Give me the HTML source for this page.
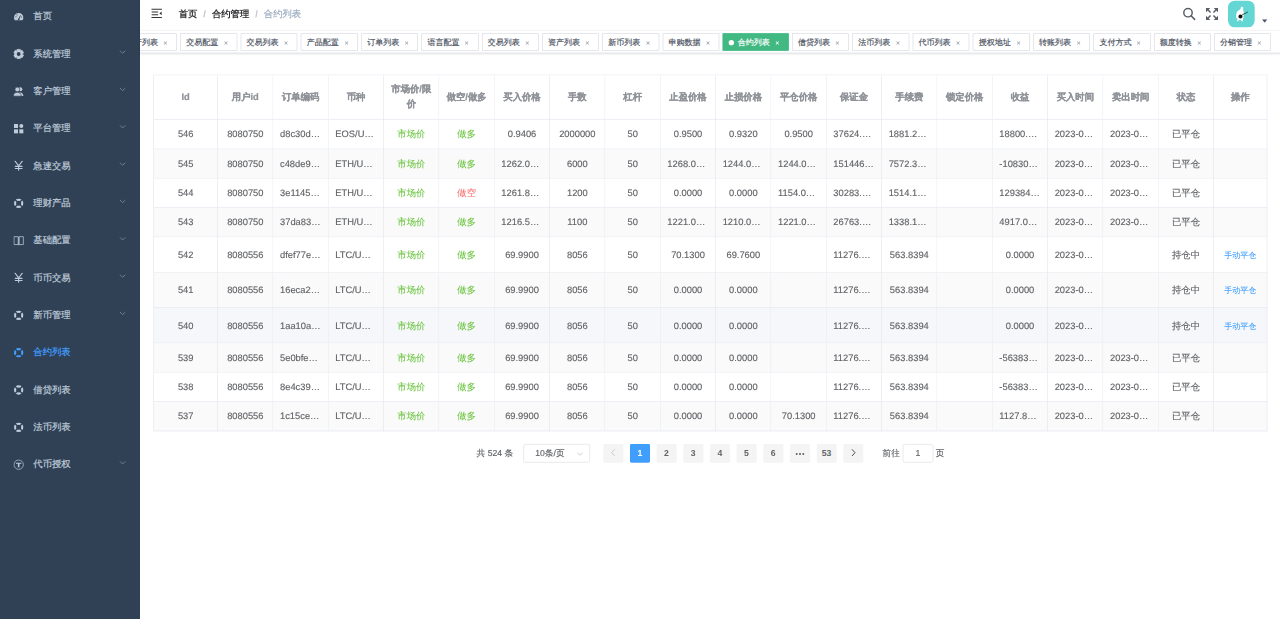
<!DOCTYPE html><html><head><meta charset="utf-8"><style>
*{box-sizing:border-box}
html,body{margin:0;padding:0;background:#fff;overflow:hidden}
body{width:1280px;height:619px;font-family:"Liberation Sans",sans-serif;text-rendering:geometricPrecision}
#z{transform:scale(0.6666667);transform-origin:0 0;width:1920px;height:929px;position:relative;overflow:hidden}
#app{position:absolute;left:0;top:-4px;width:1920px;height:940px}
.sb{position:absolute;left:0;top:0;width:210px;height:940px;background:#304156}
.mi{position:relative;height:56px;line-height:56px;padding-left:20px;font-size:14px;color:#bfcbd9;white-space:nowrap}
.mi svg{position:absolute;left:20px;top:21px}
.mi .t{position:absolute;left:50px;top:0;-webkit-text-stroke:0.3px #bfcbd9}
.mi.act .t{-webkit-text-stroke:0.3px #409eff}
.mi.act .t{color:#409eff}
.mi .ar{position:absolute;left:auto;right:20px;top:22px;width:12px;height:8px}
.main{position:absolute;left:210px;top:0;width:1710px;height:940px}
.nav{position:absolute;left:0;top:0;width:1710px;height:50px;box-shadow:0 1px 4px rgba(0,21,41,.08);background:#fff}
.ham{position:absolute;left:15px;top:14px}
.bc{position:absolute;left:58px;top:0;line-height:50px;font-size:14px;color:#303133;white-space:nowrap}
.bc .sep{margin:0 9px;color:#c0c4cc;font-weight:700}
.bc .last{color:#97a8be;font-weight:400}
.bc .lk{font-weight:700}
.tv{position:absolute;left:0;top:50px;width:1710px;height:34px;background:#fff;border-bottom:1px solid #d8dce5;box-shadow:0 1px 3px 0 rgba(0,0,0,.12),0 0 3px 0 rgba(0,0,0,.04);overflow:hidden}
.tw{position:absolute;left:-35px;top:4px;white-space:nowrap}
.tg{display:inline-block;position:relative;height:26px;line-height:27px;border:1px solid #d8dce5;color:#495060;background:#fff;padding:0 8px;font-size:12px;margin-left:5px;vertical-align:top;-webkit-text-stroke:0.25px #495060}
.tg.on{-webkit-text-stroke:0.25px #fff}
.tg .x{display:inline-block;width:16.08px;height:0;vertical-align:0;text-align:center;position:relative}
.tg .x:before{content:"";position:absolute;left:5px;top:-4px;width:6px;height:1px;background:#9da3ad;transform:rotate(45deg)}
.tg .x:after{content:"";position:absolute;left:5px;top:-4px;width:6px;height:1px;background:#9da3ad;transform:rotate(-45deg)}
.tg.on{background:#42b983;color:#fff;border-color:#42b983}
.tg.on:before{content:"";background:#fff;display:inline-block;width:8px;height:8px;border-radius:50%;position:relative;margin-right:2px}
.tg.on .x:before,.tg.on .x:after{background:#fff}
table.tb{position:absolute;left:20px;top:116px;width:1670px;table-layout:fixed;border-collapse:separate;border-spacing:0;border-top:1px solid #e3e7ef;border-left:1px solid #e3e7ef;font-size:14px;color:#606266}
.tb td,.tb th{border-right:1px solid #e3e7ef;border-bottom:1px solid #e3e7ef;padding:0;text-align:center;vertical-align:middle}
.tb th{color:#909399;font-weight:700;height:67px;background:#fff;-webkit-text-stroke:0.35px #909399}
.tb th .c{position:relative;top:-1px}
.tb td .c{-webkit-text-stroke-width:0.2px}
.tb .c{padding:0 10px;line-height:23px;overflow:hidden;text-overflow:ellipsis;white-space:nowrap;text-align:center}
.tb th .c{white-space:normal;word-break:break-all;text-overflow:clip}
.g{color:#67c23a}.r{color:#f56c6c}.bl{color:#409eff}
.tb td .c.g,.tb td .c.r,.tb td .c.bl{-webkit-text-stroke-width:0.1px}
.tot,.jmp,.sel{-webkit-text-stroke:0.2px #606266}
.bc .last{-webkit-text-stroke:0.2px #97a8be}
.pg{position:absolute;left:0.8px;top:668px;width:1710px;text-align:center;white-space:nowrap;font-size:13px}
.pgi{display:inline-block;padding:2px 5px;color:#303133;font-weight:700}
.pgi>*{display:inline-block;vertical-align:top;height:28px;line-height:28px}
.tot{margin-right:10px;font-weight:400;color:#606266}
.sel{width:100px;margin:0 15px 0 5px;border:1px solid #dcdfe6;border-radius:3px;position:relative;font-weight:400;color:#606266;text-align:left;padding-left:17px;line-height:26px}
.btn{min-width:30px;margin:0 5px;background:#f4f4f5;color:#606266;border-radius:2px;text-align:center}
.btn.on{background:#409eff;color:#fff}
.jmp{margin-left:24px;font-weight:400;color:#606266}
.ed{display:inline-block;width:46px;height:28px;margin:0 4px;border:1px solid #dcdfe6;border-radius:3px;text-align:center;vertical-align:top;line-height:26px;color:#606266}
</style></head><body><div id="z"><div id="app"><div class="sb"><div class="mi"><svg width="16" height="16" viewBox="0 0 16 16"><path d="M8 2.5A7 7 0 0 0 1 9.5c0 1.6.5 3 1.4 4h11.2c.9-1 1.4-2.4 1.4-4a7 7 0 0 0-7-7z" fill="#bfcbd9"/><path d="M8 12.2 10.8 6.2" stroke="#304156" stroke-width="1.3"/><circle cx="8" cy="12" r="1.3" fill="#304156"/><circle cx="4" cy="8" r=".8" fill="#304156"/><circle cx="5.5" cy="5.3" r=".8" fill="#304156"/><circle cx="12.2" cy="8.6" r=".8" fill="#304156"/></svg><span class="t">首页</span></div><div class="mi"><svg width="16" height="16" viewBox="0 0 16 16"><path d="M5.22 3.14 L5.75 0.74 L10.25 0.74 L10.78 3.14 L10.82 3.16 L13.16 2.42 L15.41 6.31 L13.60 7.98 L13.60 8.02 L15.41 9.69 L13.16 13.58 L10.82 12.84 L10.78 12.86 L10.25 15.26 L5.75 15.26 L5.22 12.86 L5.18 12.84 L2.84 13.58 L0.59 9.69 L2.40 8.02 L2.40 7.98 L0.59 6.31 L2.84 2.42 L5.18 3.16Z" fill="#bfcbd9" stroke="#bfcbd9" stroke-width="1" stroke-linejoin="round"/><circle cx="8" cy="8" r="2.9" fill="#304156"/></svg><span class="t">系统管理</span><svg class="ar" viewBox="0 0 12 8"><path d="M2 2 6 6 10 2" stroke="#909399" stroke-width="1.1" fill="none"/></svg></div><div class="mi"><svg width="16" height="16" viewBox="0 0 16 16"><circle cx="10.5" cy="5" r="3" fill="#bfcbd9"/><path d="M6 15c0-3.5 2-5.4 4.5-5.4S15 11.5 15 15z" fill="#bfcbd9"/><circle cx="6" cy="5.2" r="3.6" fill="#bfcbd9" stroke="#304156" stroke-width="1"/><path d="M0 15.3c0-4 2.5-5.8 6-5.8s6 1.8 6 5.8z" fill="#bfcbd9" stroke="#304156" stroke-width="1"/></svg><span class="t">客户管理</span><svg class="ar" viewBox="0 0 12 8"><path d="M2 2 6 6 10 2" stroke="#909399" stroke-width="1.1" fill="none"/></svg></div><div class="mi"><svg width="16" height="16" viewBox="0 0 16 16"><rect x="1" y="1" width="6" height="6" fill="#bfcbd9"/><circle cx="12" cy="4" r="3" fill="#bfcbd9"/><rect x="1" y="9" width="6" height="6" fill="#bfcbd9"/><rect x="9" y="9" width="6" height="6" fill="#bfcbd9"/></svg><span class="t">平台管理</span><svg class="ar" viewBox="0 0 12 8"><path d="M2 2 6 6 10 2" stroke="#909399" stroke-width="1.1" fill="none"/></svg></div><div class="mi"><svg width="16" height="16" viewBox="0 0 16 16"><path d="M2 0 8 7.8 14 0M8 7.8V15M2.3 8.6h11.4M2.3 11.8h11.4" stroke="#bfcbd9" stroke-width="1.6" fill="none"/></svg><span class="t">急速交易</span><svg class="ar" viewBox="0 0 12 8"><path d="M2 2 6 6 10 2" stroke="#909399" stroke-width="1.1" fill="none"/></svg></div><div class="mi"><svg width="16" height="16" viewBox="0 0 16 16"><circle cx="8" cy="8" r="5.4" stroke="#bfcbd9" stroke-width="3.2" fill="none"/><path d="M8 8 1.5 1.5M8 8l6.5-6.5M8 8l6.5 6.5M8 8l-6.5 6.5" stroke="#304156" stroke-width="2"/></svg><span class="t">理财产品</span><svg class="ar" viewBox="0 0 12 8"><path d="M2 2 6 6 10 2" stroke="#909399" stroke-width="1.1" fill="none"/></svg></div><div class="mi"><svg width="16" height="16" viewBox="0 0 16 16"><path d="M1 2h6.3v11.8H1zM8.7 2H15v11.8H8.7z" stroke="#bfcbd9" stroke-width="1.1" fill="none"/><path d="M8 2.5v12.5" stroke="#bfcbd9" stroke-width="1"/></svg><span class="t">基础配置</span><svg class="ar" viewBox="0 0 12 8"><path d="M2 2 6 6 10 2" stroke="#909399" stroke-width="1.1" fill="none"/></svg></div><div class="mi"><svg width="16" height="16" viewBox="0 0 16 16"><path d="M2 0 8 7.8 14 0M8 7.8V15M2.3 8.6h11.4M2.3 11.8h11.4" stroke="#bfcbd9" stroke-width="1.6" fill="none"/></svg><span class="t">币币交易</span><svg class="ar" viewBox="0 0 12 8"><path d="M2 2 6 6 10 2" stroke="#909399" stroke-width="1.1" fill="none"/></svg></div><div class="mi"><svg width="16" height="16" viewBox="0 0 16 16"><circle cx="8" cy="8" r="5.4" stroke="#bfcbd9" stroke-width="3.2" fill="none"/><path d="M8 8 1.5 1.5M8 8l6.5-6.5M8 8l6.5 6.5M8 8l-6.5 6.5" stroke="#304156" stroke-width="2"/></svg><span class="t">新币管理</span><svg class="ar" viewBox="0 0 12 8"><path d="M2 2 6 6 10 2" stroke="#909399" stroke-width="1.1" fill="none"/></svg></div><div class="mi act"><svg width="16" height="16" viewBox="0 0 16 16"><circle cx="8" cy="8" r="5.4" stroke="#409eff" stroke-width="3.2" fill="none"/><path d="M8 8 1.5 1.5M8 8l6.5-6.5M8 8l6.5 6.5M8 8l-6.5 6.5" stroke="#304156" stroke-width="2"/></svg><span class="t">合约列表</span></div><div class="mi"><svg width="16" height="16" viewBox="0 0 16 16"><circle cx="8" cy="8" r="5.4" stroke="#bfcbd9" stroke-width="3.2" fill="none"/><path d="M8 8 1.5 1.5M8 8l6.5-6.5M8 8l6.5 6.5M8 8l-6.5 6.5" stroke="#304156" stroke-width="2"/></svg><span class="t">借贷列表</span></div><div class="mi"><svg width="16" height="16" viewBox="0 0 16 16"><circle cx="8" cy="8" r="5.4" stroke="#bfcbd9" stroke-width="3.2" fill="none"/><path d="M8 8 1.5 1.5M8 8l6.5-6.5M8 8l6.5 6.5M8 8l-6.5 6.5" stroke="#304156" stroke-width="2"/></svg><span class="t">法币列表</span></div><div class="mi"><svg width="16" height="16" viewBox="0 0 16 16"><circle cx="8" cy="8" r="7" stroke="#bfcbd9" stroke-width="1.1" fill="none"/><path d="M4 5h8v1.6H9.2V12H6.8V6.6H4z" fill="#bfcbd9"/></svg><span class="t">代币授权</span><svg class="ar" viewBox="0 0 12 8"><path d="M2 2 6 6 10 2" stroke="#909399" stroke-width="1.1" fill="none"/></svg></div></div><div class="main"><div class="nav"><svg class="ham" width="20" height="20" viewBox="0 0 1024 1024"><path transform="rotate(180 512 512)" fill="#333" d="M408 442h480c4.4 0 8-3.6 8-8v-56c0-4.4-3.6-8-8-8H408c-4.4 0-8 3.6-8 8v56c0 4.4 3.6 8 8 8zm-8 204c0 4.4 3.6 8 8 8h480c4.4 0 8-3.6 8-8v-56c0-4.4-3.6-8-8-8H408c-4.4 0-8 3.6-8 8v56zm504-486H120c-4.4 0-8 3.6-8 8v56c0 4.4 3.6 8 8 8h784c4.4 0 8-3.6 8-8v-56c0-4.4-3.6-8-8-8zm0 632H120c-4.4 0-8 3.6-8 8v56c0 4.4 3.6 8 8 8h784c4.4 0 8-3.6 8-8v-56c0-4.4-3.6-8-8-8zM142.4 642.1L298.7 519a8.84 8.84 0 0 0 0-13.9L142.4 381.9c-5.8-4.6-14.4-.5-14.4 6.9v246.3a8.9 8.9 0 0 0 14.4 7z"/></svg><div class="bc"><span class="lk">首页</span><span class="sep">/</span><span class="lk">合约管理</span><span class="sep">/</span><span class="last">合约列表</span></div><svg style="position:absolute;left:1564px;top:15px" width="20" height="20" viewBox="0 0 20 20"><circle cx="8" cy="8" r="6.3" stroke="#5a5e66" stroke-width="2.2" fill="none"/><path d="M12.6 12.6 18 18" stroke="#5a5e66" stroke-width="2.4" stroke-linecap="round"/></svg><svg style="position:absolute;left:1598px;top:15px" width="20" height="20" viewBox="0 0 20 20"><g fill="#5a5e66"><path d="M1 1h6.5L1 7.5z"/><path d="M19 1h-6.5L19 7.5z"/><path d="M1 19h6.5L1 12.5z"/><path d="M19 19h-6.5L19 12.5z"/></g><g stroke="#5a5e66" stroke-width="2.2"><path d="M3 3 7.8 7.8M17 3 12.2 7.8M3 17 7.8 12.2M17 17 12.2 12.2"/></g></svg><div style="position:absolute;left:1632px;top:5px;width:40px;height:40px;border-radius:10px;background:#64d6d3;overflow:hidden"><svg width="40" height="40" viewBox="0 0 40 40"><path d="M21 9C23 9 23.5 11 22.5 13L23.5 17C24 21 23.5 26 22 29L22.5 31H20.5L19.5 29 16 29.5 15 31H13L14.5 28C12 26 11 22 13 18 14.5 15 17 14 19 13 18.5 11 19 9 21 9Z" fill="#fff"/><circle cx="18.7" cy="23.8" r="3" fill="#111"/><path d="M21 21.5 29.8 17" stroke="#111" stroke-width="1"/></svg></div><svg style="position:absolute;left:1683px;top:33px" width="8" height="5" viewBox="0 0 8 5"><path d="M0 0h8L4 5z" fill="#4a5468"/></svg></div><div class="tv"><div class="tw"><span class="tg">资产列表 <span class="x"></span></span><span class="tg">交易配置 <span class="x"></span></span><span class="tg">交易列表 <span class="x"></span></span><span class="tg">产品配置 <span class="x"></span></span><span class="tg">订单列表 <span class="x"></span></span><span class="tg">语言配置 <span class="x"></span></span><span class="tg">交易列表 <span class="x"></span></span><span class="tg">资产列表 <span class="x"></span></span><span class="tg">新币列表 <span class="x"></span></span><span class="tg">申购数据 <span class="x"></span></span><span class="tg on"> 合约列表 <span class="x"></span></span><span class="tg">借贷列表 <span class="x"></span></span><span class="tg">法币列表 <span class="x"></span></span><span class="tg">代币列表 <span class="x"></span></span><span class="tg">授权地址 <span class="x"></span></span><span class="tg">转账列表 <span class="x"></span></span><span class="tg">支付方式 <span class="x"></span></span><span class="tg">额度转换 <span class="x"></span></span><span class="tg">分销管理 <span class="x"></span></span></div></div><table class="tb"><colgroup><col style="width:96.000px"><col style="width:83.000px"><col style="width:83.000px"><col style="width:83.000px"><col style="width:83.000px"><col style="width:83.000px"><col style="width:83.000px"><col style="width:83.000px"><col style="width:83.000px"><col style="width:83.000px"><col style="width:83.000px"><col style="width:83.000px"><col style="width:83.000px"><col style="width:83.000px"><col style="width:83.000px"><col style="width:83.000px"><col style="width:83.000px"><col style="width:83.000px"><col style="width:83.000px"><col style="width:80.000px"></colgroup><tr><th><div class="c">Id</div></th><th><div class="c">用户id</div></th><th><div class="c">订单编码</div></th><th><div class="c">币种</div></th><th><div class="c">市场价/限价</div></th><th><div class="c">做空/做多</div></th><th><div class="c">买入价格</div></th><th><div class="c">手数</div></th><th><div class="c">杠杆</div></th><th><div class="c">止盈价格</div></th><th><div class="c">止损价格</div></th><th><div class="c">平仓价格</div></th><th><div class="c">保证金</div></th><th><div class="c">手续费</div></th><th><div class="c">锁定价格</div></th><th><div class="c">收益</div></th><th><div class="c">买入时间</div></th><th><div class="c">卖出时间</div></th><th><div class="c">状态</div></th><th><div class="c">操作</div></th></tr><tr><td style="height:44px;background:#fff"><div class="c ">546</div></td><td style="height:44px;background:#fff"><div class="c ">8080750</div></td><td style="height:44px;background:#fff"><div class="c ">d8c30d2a9f1b4c7e</div></td><td style="height:44px;background:#fff"><div class="c ">EOS/USDT</div></td><td style="height:44px;background:#fff"><div class="c g">市场价</div></td><td style="height:44px;background:#fff"><div class="c g">做多</div></td><td style="height:44px;background:#fff"><div class="c ">0.9406</div></td><td style="height:44px;background:#fff"><div class="c ">2000000</div></td><td style="height:44px;background:#fff"><div class="c ">50</div></td><td style="height:44px;background:#fff"><div class="c ">0.9500</div></td><td style="height:44px;background:#fff"><div class="c ">0.9320</div></td><td style="height:44px;background:#fff"><div class="c ">0.9500</div></td><td style="height:44px;background:#fff"><div class="c ">37624.0000</div></td><td style="height:44px;background:#fff"><div class="c ">1881.2000</div></td><td style="height:44px;background:#fff"><div class="c "></div></td><td style="height:44px;background:#fff"><div class="c ">18800.0000</div></td><td style="height:44px;background:#fff"><div class="c ">2023-05-12 10:21:33</div></td><td style="height:44px;background:#fff"><div class="c ">2023-05-12 11:02:10</div></td><td style="height:44px;background:#fff"><div class="c ">已平仓</div></td><td style="height:44px;background:#fff"><div class="c bl" style="font-size:12px;position:relative;top:1px"></div></td></tr><tr><td style="height:44px;background:#fafafa"><div class="c ">545</div></td><td style="height:44px;background:#fafafa"><div class="c ">8080750</div></td><td style="height:44px;background:#fafafa"><div class="c ">c48de9a1b2c3d4e5</div></td><td style="height:44px;background:#fafafa"><div class="c ">ETH/USDT</div></td><td style="height:44px;background:#fafafa"><div class="c g">市场价</div></td><td style="height:44px;background:#fafafa"><div class="c g">做多</div></td><td style="height:44px;background:#fafafa"><div class="c ">1262.0000</div></td><td style="height:44px;background:#fafafa"><div class="c ">6000</div></td><td style="height:44px;background:#fafafa"><div class="c ">50</div></td><td style="height:44px;background:#fafafa"><div class="c ">1268.0000</div></td><td style="height:44px;background:#fafafa"><div class="c ">1244.0000</div></td><td style="height:44px;background:#fafafa"><div class="c ">1244.0000</div></td><td style="height:44px;background:#fafafa"><div class="c ">151446.0000</div></td><td style="height:44px;background:#fafafa"><div class="c ">7572.3000</div></td><td style="height:44px;background:#fafafa"><div class="c "></div></td><td style="height:44px;background:#fafafa"><div class="c ">-108300.0000</div></td><td style="height:44px;background:#fafafa"><div class="c ">2023-05-12 10:21:33</div></td><td style="height:44px;background:#fafafa"><div class="c ">2023-05-12 11:02:10</div></td><td style="height:44px;background:#fafafa"><div class="c ">已平仓</div></td><td style="height:44px;background:#fafafa"><div class="c bl" style="font-size:12px;position:relative;top:1px"></div></td></tr><tr><td style="height:44px;background:#fff"><div class="c ">544</div></td><td style="height:44px;background:#fff"><div class="c ">8080750</div></td><td style="height:44px;background:#fff"><div class="c ">3e1145a1b2c3d4e5</div></td><td style="height:44px;background:#fff"><div class="c ">ETH/USDT</div></td><td style="height:44px;background:#fff"><div class="c g">市场价</div></td><td style="height:44px;background:#fff"><div class="c r">做空</div></td><td style="height:44px;background:#fff"><div class="c ">1261.8000</div></td><td style="height:44px;background:#fff"><div class="c ">1200</div></td><td style="height:44px;background:#fff"><div class="c ">50</div></td><td style="height:44px;background:#fff"><div class="c ">0.0000</div></td><td style="height:44px;background:#fff"><div class="c ">0.0000</div></td><td style="height:44px;background:#fff"><div class="c ">1154.0000</div></td><td style="height:44px;background:#fff"><div class="c ">30283.2000</div></td><td style="height:44px;background:#fff"><div class="c ">1514.1600</div></td><td style="height:44px;background:#fff"><div class="c "></div></td><td style="height:44px;background:#fff"><div class="c ">129384.0000</div></td><td style="height:44px;background:#fff"><div class="c ">2023-05-12 10:21:33</div></td><td style="height:44px;background:#fff"><div class="c ">2023-05-12 11:02:10</div></td><td style="height:44px;background:#fff"><div class="c ">已平仓</div></td><td style="height:44px;background:#fff"><div class="c bl" style="font-size:12px;position:relative;top:1px"></div></td></tr><tr><td style="height:44px;background:#fafafa"><div class="c ">543</div></td><td style="height:44px;background:#fafafa"><div class="c ">8080750</div></td><td style="height:44px;background:#fafafa"><div class="c ">37da83a1b2c3d4e5</div></td><td style="height:44px;background:#fafafa"><div class="c ">ETH/USDT</div></td><td style="height:44px;background:#fafafa"><div class="c g">市场价</div></td><td style="height:44px;background:#fafafa"><div class="c g">做多</div></td><td style="height:44px;background:#fafafa"><div class="c ">1216.5000</div></td><td style="height:44px;background:#fafafa"><div class="c ">1100</div></td><td style="height:44px;background:#fafafa"><div class="c ">50</div></td><td style="height:44px;background:#fafafa"><div class="c ">1221.0000</div></td><td style="height:44px;background:#fafafa"><div class="c ">1210.0000</div></td><td style="height:44px;background:#fafafa"><div class="c ">1221.0000</div></td><td style="height:44px;background:#fafafa"><div class="c ">26763.0000</div></td><td style="height:44px;background:#fafafa"><div class="c ">1338.1500</div></td><td style="height:44px;background:#fafafa"><div class="c "></div></td><td style="height:44px;background:#fafafa"><div class="c ">4917.0000</div></td><td style="height:44px;background:#fafafa"><div class="c ">2023-05-12 10:21:33</div></td><td style="height:44px;background:#fafafa"><div class="c ">2023-05-12 11:02:10</div></td><td style="height:44px;background:#fafafa"><div class="c ">已平仓</div></td><td style="height:44px;background:#fafafa"><div class="c bl" style="font-size:12px;position:relative;top:1px"></div></td></tr><tr><td style="height:53px;background:#fff"><div class="c ">542</div></td><td style="height:53px;background:#fff"><div class="c ">8080556</div></td><td style="height:53px;background:#fff"><div class="c ">dfef77ea1b2c3d4e</div></td><td style="height:53px;background:#fff"><div class="c ">LTC/USDT</div></td><td style="height:53px;background:#fff"><div class="c g">市场价</div></td><td style="height:53px;background:#fff"><div class="c g">做多</div></td><td style="height:53px;background:#fff"><div class="c ">69.9900</div></td><td style="height:53px;background:#fff"><div class="c ">8056</div></td><td style="height:53px;background:#fff"><div class="c ">50</div></td><td style="height:53px;background:#fff"><div class="c ">70.1300</div></td><td style="height:53px;background:#fff"><div class="c ">69.7600</div></td><td style="height:53px;background:#fff"><div class="c "></div></td><td style="height:53px;background:#fff"><div class="c ">11276.7880</div></td><td style="height:53px;background:#fff"><div class="c ">563.8394</div></td><td style="height:53px;background:#fff"><div class="c "></div></td><td style="height:53px;background:#fff"><div class="c ">0.0000</div></td><td style="height:53px;background:#fff"><div class="c ">2023-05-12 10:21:33</div></td><td style="height:53px;background:#fff"><div class="c "></div></td><td style="height:53px;background:#fff"><div class="c ">持仓中</div></td><td style="height:53px;background:#fff"><div class="c bl" style="font-size:12px;position:relative;top:1px">手动平仓</div></td></tr><tr><td style="height:53px;background:#fafafa"><div class="c ">541</div></td><td style="height:53px;background:#fafafa"><div class="c ">8080556</div></td><td style="height:53px;background:#fafafa"><div class="c ">16eca2a1b2c3d4e5</div></td><td style="height:53px;background:#fafafa"><div class="c ">LTC/USDT</div></td><td style="height:53px;background:#fafafa"><div class="c g">市场价</div></td><td style="height:53px;background:#fafafa"><div class="c g">做多</div></td><td style="height:53px;background:#fafafa"><div class="c ">69.9900</div></td><td style="height:53px;background:#fafafa"><div class="c ">8056</div></td><td style="height:53px;background:#fafafa"><div class="c ">50</div></td><td style="height:53px;background:#fafafa"><div class="c ">0.0000</div></td><td style="height:53px;background:#fafafa"><div class="c ">0.0000</div></td><td style="height:53px;background:#fafafa"><div class="c "></div></td><td style="height:53px;background:#fafafa"><div class="c ">11276.7880</div></td><td style="height:53px;background:#fafafa"><div class="c ">563.8394</div></td><td style="height:53px;background:#fafafa"><div class="c "></div></td><td style="height:53px;background:#fafafa"><div class="c ">0.0000</div></td><td style="height:53px;background:#fafafa"><div class="c ">2023-05-12 10:21:33</div></td><td style="height:53px;background:#fafafa"><div class="c "></div></td><td style="height:53px;background:#fafafa"><div class="c ">持仓中</div></td><td style="height:53px;background:#fafafa"><div class="c bl" style="font-size:12px;position:relative;top:1px">手动平仓</div></td></tr><tr><td style="height:53px;background:#f5f7fa"><div class="c ">540</div></td><td style="height:53px;background:#f5f7fa"><div class="c ">8080556</div></td><td style="height:53px;background:#f5f7fa"><div class="c ">1aa10aa1b2c3d4e5</div></td><td style="height:53px;background:#f5f7fa"><div class="c ">LTC/USDT</div></td><td style="height:53px;background:#f5f7fa"><div class="c g">市场价</div></td><td style="height:53px;background:#f5f7fa"><div class="c g">做多</div></td><td style="height:53px;background:#f5f7fa"><div class="c ">69.9900</div></td><td style="height:53px;background:#f5f7fa"><div class="c ">8056</div></td><td style="height:53px;background:#f5f7fa"><div class="c ">50</div></td><td style="height:53px;background:#f5f7fa"><div class="c ">0.0000</div></td><td style="height:53px;background:#f5f7fa"><div class="c ">0.0000</div></td><td style="height:53px;background:#f5f7fa"><div class="c "></div></td><td style="height:53px;background:#f5f7fa"><div class="c ">11276.7880</div></td><td style="height:53px;background:#f5f7fa"><div class="c ">563.8394</div></td><td style="height:53px;background:#f5f7fa"><div class="c "></div></td><td style="height:53px;background:#f5f7fa"><div class="c ">0.0000</div></td><td style="height:53px;background:#f5f7fa"><div class="c ">2023-05-12 10:21:33</div></td><td style="height:53px;background:#f5f7fa"><div class="c "></div></td><td style="height:53px;background:#f5f7fa"><div class="c ">持仓中</div></td><td style="height:53px;background:#f5f7fa"><div class="c bl" style="font-size:12px;position:relative;top:1px">手动平仓</div></td></tr><tr><td style="height:44px;background:#fafafa"><div class="c ">539</div></td><td style="height:44px;background:#fafafa"><div class="c ">8080556</div></td><td style="height:44px;background:#fafafa"><div class="c ">5e0bfea1b2c3d4e5</div></td><td style="height:44px;background:#fafafa"><div class="c ">LTC/USDT</div></td><td style="height:44px;background:#fafafa"><div class="c g">市场价</div></td><td style="height:44px;background:#fafafa"><div class="c g">做多</div></td><td style="height:44px;background:#fafafa"><div class="c ">69.9900</div></td><td style="height:44px;background:#fafafa"><div class="c ">8056</div></td><td style="height:44px;background:#fafafa"><div class="c ">50</div></td><td style="height:44px;background:#fafafa"><div class="c ">0.0000</div></td><td style="height:44px;background:#fafafa"><div class="c ">0.0000</div></td><td style="height:44px;background:#fafafa"><div class="c "></div></td><td style="height:44px;background:#fafafa"><div class="c ">11276.7880</div></td><td style="height:44px;background:#fafafa"><div class="c ">563.8394</div></td><td style="height:44px;background:#fafafa"><div class="c "></div></td><td style="height:44px;background:#fafafa"><div class="c ">-563830.0000</div></td><td style="height:44px;background:#fafafa"><div class="c ">2023-05-12 10:21:33</div></td><td style="height:44px;background:#fafafa"><div class="c ">2023-05-12 11:02:10</div></td><td style="height:44px;background:#fafafa"><div class="c ">已平仓</div></td><td style="height:44px;background:#fafafa"><div class="c bl" style="font-size:12px;position:relative;top:1px"></div></td></tr><tr><td style="height:44px;background:#fff"><div class="c ">538</div></td><td style="height:44px;background:#fff"><div class="c ">8080556</div></td><td style="height:44px;background:#fff"><div class="c ">8e4c39a1b2c3d4e5</div></td><td style="height:44px;background:#fff"><div class="c ">LTC/USDT</div></td><td style="height:44px;background:#fff"><div class="c g">市场价</div></td><td style="height:44px;background:#fff"><div class="c g">做多</div></td><td style="height:44px;background:#fff"><div class="c ">69.9900</div></td><td style="height:44px;background:#fff"><div class="c ">8056</div></td><td style="height:44px;background:#fff"><div class="c ">50</div></td><td style="height:44px;background:#fff"><div class="c ">0.0000</div></td><td style="height:44px;background:#fff"><div class="c ">0.0000</div></td><td style="height:44px;background:#fff"><div class="c "></div></td><td style="height:44px;background:#fff"><div class="c ">11276.7880</div></td><td style="height:44px;background:#fff"><div class="c ">563.8394</div></td><td style="height:44px;background:#fff"><div class="c "></div></td><td style="height:44px;background:#fff"><div class="c ">-563830.0000</div></td><td style="height:44px;background:#fff"><div class="c ">2023-05-12 10:21:33</div></td><td style="height:44px;background:#fff"><div class="c ">2023-05-12 11:02:10</div></td><td style="height:44px;background:#fff"><div class="c ">已平仓</div></td><td style="height:44px;background:#fff"><div class="c bl" style="font-size:12px;position:relative;top:1px"></div></td></tr><tr><td style="height:44px;background:#fafafa"><div class="c ">537</div></td><td style="height:44px;background:#fafafa"><div class="c ">8080556</div></td><td style="height:44px;background:#fafafa"><div class="c ">1c15cea1b2c3d4e5</div></td><td style="height:44px;background:#fafafa"><div class="c ">LTC/USDT</div></td><td style="height:44px;background:#fafafa"><div class="c g">市场价</div></td><td style="height:44px;background:#fafafa"><div class="c g">做多</div></td><td style="height:44px;background:#fafafa"><div class="c ">69.9900</div></td><td style="height:44px;background:#fafafa"><div class="c ">8056</div></td><td style="height:44px;background:#fafafa"><div class="c ">50</div></td><td style="height:44px;background:#fafafa"><div class="c ">0.0000</div></td><td style="height:44px;background:#fafafa"><div class="c ">0.0000</div></td><td style="height:44px;background:#fafafa"><div class="c ">70.1300</div></td><td style="height:44px;background:#fafafa"><div class="c ">11276.7880</div></td><td style="height:44px;background:#fafafa"><div class="c ">563.8394</div></td><td style="height:44px;background:#fafafa"><div class="c "></div></td><td style="height:44px;background:#fafafa"><div class="c ">1127.8000</div></td><td style="height:44px;background:#fafafa"><div class="c ">2023-05-12 10:21:33</div></td><td style="height:44px;background:#fafafa"><div class="c ">2023-05-12 11:02:10</div></td><td style="height:44px;background:#fafafa"><div class="c ">已平仓</div></td><td style="height:44px;background:#fafafa"><div class="c bl" style="font-size:12px;position:relative;top:1px"></div></td></tr></table><div class="pg"><div class="pgi"><span class="tot">共 524 条</span><span class="sel">10条/页<svg style="position:absolute;right:9px;top:11px" width="10" height="6" viewBox="0 0 10 6"><path d="M1 1 5 5 9 1" stroke="#c0c4cc" stroke-width="1.2" fill="none"/></svg></span><span class="btn" style="color:#c0c4cc"><svg width="10" height="12" viewBox="0 0 10 12" style="vertical-align:-1px"><path d="M7 1 2.5 6 7 11" stroke="#c0c4cc" stroke-width="1.3" fill="none"/></svg></span><span class="btn on">1</span><span class="btn">2</span><span class="btn">3</span><span class="btn">4</span><span class="btn">5</span><span class="btn">6</span><span class="btn"><svg width="14" height="4" viewBox="0 0 14 4" style="vertical-align:1px"><circle cx="2" cy="2" r="1.6" fill="#606266"/><circle cx="7" cy="2" r="1.6" fill="#606266"/><circle cx="12" cy="2" r="1.6" fill="#606266"/></svg></span><span class="btn">53</span><span class="btn"><svg width="10" height="12" viewBox="0 0 10 12" style="vertical-align:-1px"><path d="M3 1 7.5 6 3 11" stroke="#303133" stroke-width="1.3" fill="none"/></svg></span><span class="jmp">前往<span class="ed">1</span>页</span></div></div></div></div></div></body></html>
